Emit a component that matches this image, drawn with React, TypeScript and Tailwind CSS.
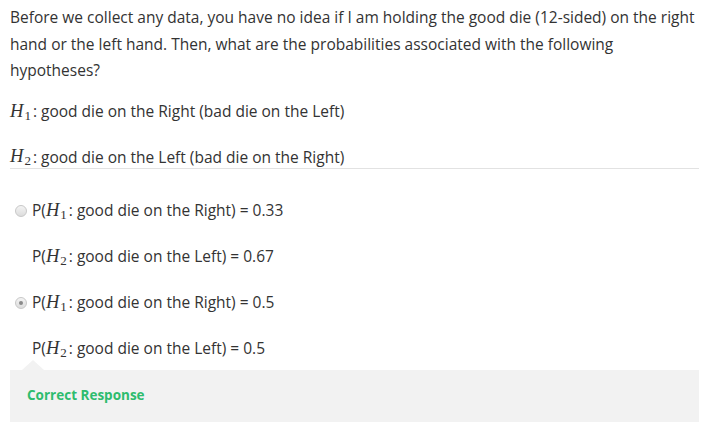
const sans = { fontFamily: '"Open Sans", "Liberation Sans", sans-serif' };

function H({ n }: { n: number }) {
  return (
    <span className="whitespace-nowrap pr-[2px]" style={{ fontFamily: '"Liberation Serif", "DejaVu Serif", serif' }}>
      <span className="italic text-[18.5px]">H</span>
      <span className="text-[13px] relative top-[3px] ml-[1px]">{n}</span>
    </span>
  );
}

function Radio({ checked }: { checked?: boolean }) {
  return (
    <span className="w-[12px] h-[12px] rounded-full border border-[#c8c8c8] bg-gradient-to-b from-[#f4f4f4] to-[#dcdcdc] flex items-center justify-center shrink-0">
      {checked && <span className="w-[4px] h-[4px] rounded-full bg-[#8a8a8a]" />}
    </span>
  );
}

function Option({ radio, checked, children }: { radio?: boolean; checked?: boolean; children: React.ReactNode }) {
  return (
    <div className="flex items-center h-[46px]">
      <div className="w-[22px] flex justify-center">{radio && <Radio checked={checked} />}</div>
      <div>{children}</div>
    </div>
  );
}

export default function App() {
  return (
    <div className="w-[709px] h-[434px] bg-white text-[15.5px] text-[#333] px-[10px] pt-[4px]" style={sans}>
      <p className="leading-[26.5px]">
        Before we collect any data, you have no idea if I am holding the good die (12-sided) on the right hand or the left hand. Then, what are the probabilities associated with the following hypotheses?
      </p>

      <div className="mt-[5px] h-[46px] flex items-center">
        <H n={1} />
        <span>: good die on the Right (bad die on the Left)</span>
      </div>
      <div className="h-[34px] pt-[12px] leading-[22px] flex items-center border-b border-[#e2e2e2]">
        <H n={2} />
        <span>: good die on the Left (bad die on the Right)</span>
      </div>

      <div className="mt-[19px]">
        <Option radio>
          P(<H n={1} />: good die on the Right) = 0.33
        </Option>
        <Option>
          P(<H n={2} />: good die on the Left) = 0.67
        </Option>
        <Option radio checked>
          P(<H n={1} />: good die on the Right) = 0.5
        </Option>
        <Option>
          P(<H n={2} />: good die on the Left) = 0.5
        </Option>
      </div>

      <div className="relative bg-[#f2f2f2] h-[52px] flex items-center px-[17px] mt-[-2px]">
        <span className="absolute left-[12px] -top-[10px] w-0 h-0 border-l-[11px] border-r-[11px] border-b-[10px] border-l-transparent border-r-transparent border-b-[#f2f2f2]" />
        <span className="text-[13.5px] font-bold text-[#2ebc6e]">Correct Response</span>
      </div>
    </div>
  );
}
